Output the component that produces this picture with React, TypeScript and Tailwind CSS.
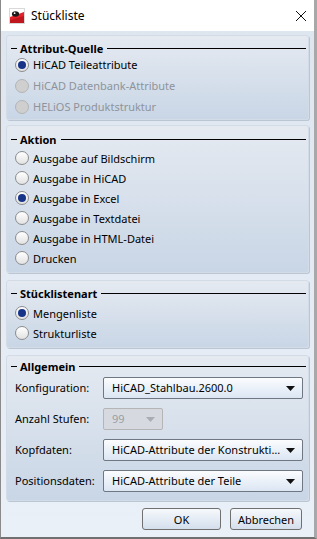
import type { ReactNode } from 'react';

const font = { fontFamily: '"Noto Sans", "Open Sans", sans-serif' };

function AppIcon() {
  return (
    <svg width="16" height="16" viewBox="0 0 16 16">
      <rect x="0.5" y="0.5" width="15" height="15" fill="#fff" stroke="#d9d9d9" />
      <path d="M1 9 L15 4 L15 15 L1 15 Z" fill="#e3232b" />
      <path d="M1 12 L15 8 L15 15 L1 15 Z" fill="#c0161d" />
      <ellipse cx="6.5" cy="6" rx="3.6" ry="2.8" fill="#1a1a1a" />
      <circle cx="5.6" cy="5.2" r="0.9" fill="#fff" />
    </svg>
  );
}

function Radio({
  label,
  checked,
  disabled,
  h = 'h-5',
}: {
  label: string;
  checked?: boolean;
  disabled?: boolean;
  h?: string;
}) {
  return (
    <div className={`flex items-center ${h}`}>
      <span
        className={`ml-[3px] mr-[4px] flex h-[14px] w-[14px] shrink-0 items-center justify-center rounded-full border ${
          disabled
            ? 'border-[#b4b4b4] bg-[#cfcfcf]'
            : 'border-[#8c8c8c] bg-gradient-to-b from-[#ffffff] to-[#e2e2e2]'
        }`}
      >
        {checked && <span className="h-[8px] w-[8px] rounded-full bg-[#173489]" />}
      </span>
      <span className={disabled ? 'text-[#8e939a]' : 'text-black'}>{label}</span>
    </div>
  );
}

function Group({
  title,
  children,
  className,
}: {
  title: string;
  children: ReactNode;
  className: string;
}) {
  return (
    <div
      className={`mx-[5px] rounded-[3px] border border-[#d3dbe6] bg-gradient-to-b from-[#e5eaf1] to-[#c9d6e6] shadow-[1px_1px_0_#bac6d4] ${className}`}
    >
      <div className="flex h-[14px] items-center pl-[4px] pr-[2px]">
        <span className="mr-[3px] h-px w-[6px] bg-black" />
        <span className="font-bold text-black">{title}</span>
        <span className="ml-[4px] h-px flex-1 bg-black" />
      </div>
      {children}
    </div>
  );
}

function Combo({
  value,
  width = 'w-[200px]',
  disabled,
}: {
  value: string;
  width?: string;
  disabled?: boolean;
}) {
  return (
    <div
      className={`flex h-[22px] shrink-0 items-center rounded-[2px] border pl-[8px] pr-[7px] ${width} ${
        disabled
          ? 'border-[#b5b5b5] bg-[#d6dae0] text-[#9a9ea4]'
          : 'border-[#6f7782] bg-gradient-to-b from-[#fbfcfe] to-[#dbe6f3] text-black'
      }`}
    >
      <span className="min-w-0 flex-1 truncate whitespace-nowrap leading-[16px]">{value}</span>
      <svg width="9" height="5" viewBox="0 0 9 5" className="ml-[4px] shrink-0">
        <path d="M0 0 H9 L4.5 5 Z" fill={disabled ? '#a9adb3' : '#111'} />
      </svg>
    </div>
  );
}

function Row({ label, children }: { label: string; children: ReactNode }) {
  return (
    <div className="flex items-center">
      <span className="w-[88px] shrink-0 whitespace-nowrap leading-[16px]">{label}</span>
      {children}
    </div>
  );
}

function Button({ children, className }: { children: ReactNode; className: string }) {
  return (
    <button
      className={`h-[22px] rounded-[3px] border border-[#707070] bg-gradient-to-b from-[#f6f9fc] to-[#d4dfec] text-black ${className}`}
    >
      {children}
    </button>
  );
}

export default function App() {
  return (
    <div
      className="flex h-[539px] w-[317px] border-b-2 border-l border-r-[3px] border-b-[#707070] border-l-[#8a8a8a] border-r-[#a8a8a8] text-[11px] leading-none"
      style={font}
    >
      <div className="flex flex-1 flex-col bg-gradient-to-b from-[#dde5ef] to-[#eaf0f8]">
        <div className="flex h-[31px] shrink-0 items-center bg-white pl-[8px] pr-[7px]">
          <AppIcon />
          <span className="ml-[6px] flex-1 text-[12px] text-black">Stückliste</span>
          <svg width="12" height="12" viewBox="0 0 12 12">
            <path d="M1 1 L11 11 M11 1 L1 11" stroke="#111" strokeWidth="1" />
          </svg>
        </div>

        <Group title="Attribut-Quelle" className="mt-[4px] pt-[5px] pb-[2px]">
          <div className="-mt-px pl-[5px]">
            <Radio label="HiCAD Teileattribute" checked h="h-[21px]" />
            <Radio label="HiCAD Datenbank-Attribute" disabled h="h-[21px]" />
            <Radio label="HELiOS Produktstruktur" disabled h="h-[21px]" />
          </div>
        </Group>

        <Group title="Aktion" className="mt-[5px] pt-[6px] pb-[4px]">
          <div className="mt-[2px] pl-[5px]">
            <Radio label="Ausgabe auf Bildschirm" />
            <Radio label="Ausgabe in HiCAD" />
            <Radio label="Ausgabe in Excel" checked />
            <Radio label="Ausgabe in Textdatei" />
            <Radio label="Ausgabe in HTML-Datei" />
            <Radio label="Drucken" />
          </div>
        </Group>

        <Group title="Stücklistenart" className="mt-[7px] pt-[5px] pb-[4px]">
          <div className="mt-[3px] pl-[5px]">
            <Radio label="Mengenliste" checked />
            <Radio label="Strukturliste" />
          </div>
        </Group>

        <Group title="Allgemein" className="mt-[7px] pt-[3px] pb-[8px]">
          <div className="mt-[4px] flex flex-col gap-[9px] pl-[8px]">
            <Row label="Konfiguration:">
              <Combo value="HiCAD_Stahlbau.2600.0" />
            </Row>
            <Row label="Anzahl Stufen:">
              <Combo value="99" width="w-[60px]" disabled />
            </Row>
            <Row label="Kopfdaten:">
              <Combo value="HiCAD-Attribute der Konstruktion" />
            </Row>
            <Row label="Positionsdaten:">
              <Combo value="HiCAD-Attribute der Teile" />
            </Row>
          </div>
        </Group>

        <div className="mt-[7px] flex justify-end gap-[9px] pr-[12px]">
          <Button className="w-[79px]">OK</Button>
          <Button className="w-[72px]">Abbrechen</Button>
        </div>
      </div>
    </div>
  );
}
